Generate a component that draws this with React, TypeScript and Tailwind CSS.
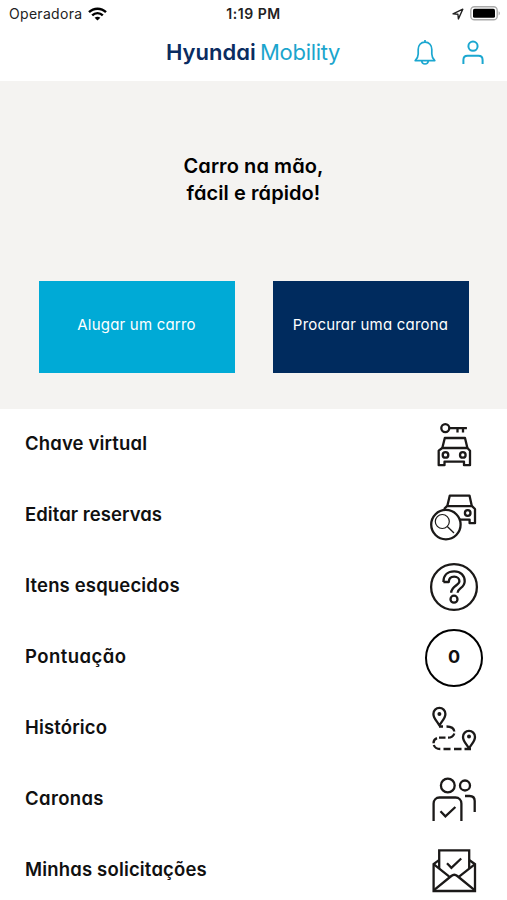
import type { ReactNode } from "react";

interface MenuItem {
  label: string;
  labelClass: string;
  icon: ReactNode;
}

function Icon({ children }: { children: ReactNode }) {
  return (
    <svg
      width="60"
      height="71"
      viewBox="0 0 60 71"
      fill="none"
      stroke="#1b1918"
      strokeWidth="2.3"
      className="shrink-0"
    >
      {children}
    </svg>
  );
}

const menu: MenuItem[] = [
  {
    label: "Chave virtual",
    labelClass: "tracking-[0.15px]",
    icon: (
      <Icon>
        <circle cx="21.3" cy="19.1" r="4" />
        <path d="M25.4 19.1H42.9M33.5 19.1V23.6M39 19.1V23.6" />
        <path d="M18.3 39L20.8 29H41L43.4 39" strokeLinejoin="round" />
        <path d="M18.3 39H43.4L46 41.7V56.2H40V52.7H20.5V56.2H14.7V41.7Z" strokeLinejoin="round" />
        <circle cx="21.5" cy="45.9" r="2.8" />
        <circle cx="38.8" cy="45.9" r="2.8" />
      </Icon>
    ),
  },
  {
    label: "Editar reservas",
    labelClass: "tracking-[0.05px]",
    icon: (
      <Icon>
        <path d="M23.3 26L25.8 15.6H45.5L47.8 26" strokeLinejoin="round" />
        <path d="M20 29L23 26.2H48L51 29V43.2H45.6V39.6H36" strokeLinejoin="round" />
        <circle cx="43.7" cy="33" r="2.8" />
        <circle cx="21.9" cy="44.6" r="14.7" fill="#fff" />
        <circle cx="18.3" cy="41.5" r="7" strokeWidth="1.2" />
        <path d="M23.3 46.5L30 53" strokeWidth="1.3" />
      </Icon>
    ),
  },
  {
    label: "Itens esquecidos",
    labelClass: "tracking-[0.15px]",
    icon: (
      <Icon>
        <circle cx="30" cy="36" r="22.9" />
        <path
          d="M19.4 31C19.4 24.2 23.8 20.4 30.2 20.4C36.6 20.4 40.7 24.6 40.7 30.2C40.7 37.2 33.6 37 33.6 41.8M19.4 31H24.8C24.8 27.6 27 25.6 30.2 25.6C33.4 25.6 35.4 27.8 35.4 30.2C35.4 34.4 27.2 35 27.2 41.8"
          strokeLinejoin="round"
        />
        <circle cx="30" cy="48.2" r="3.5" />
      </Icon>
    ),
  },
  {
    label: "Pontuação",
    labelClass: "tracking-[0.45px]",
    icon: (
      <div className="mr-px flex h-[58px] w-[58px] items-center justify-center rounded-full border-[2.3px] border-black pb-[2px] text-[18px] font-bold">
        0
      </div>
    ),
  },
  {
    label: "Histórico",
    labelClass: "tracking-[0.15px]",
    icon: (
      <Icon>
        <path d="M15.4 32.5C13 28 9.4 25.2 9.4 20.9A6 6 0 0 1 21.4 20.9C21.4 25.2 17.8 28 15.4 32.5Z" strokeLinejoin="round" />
        <circle cx="15.4" cy="21" r="2" fill="#1b1918" stroke="none" />
        <path d="M45 55.5C42.6 51 39 48.2 39 43.9A6 6 0 0 1 51 43.9C51 48.2 47.4 51 45 55.5Z" strokeLinejoin="round" />
        <circle cx="45" cy="43.6" r="2" fill="#1b1918" stroke="none" />
        <path d="M15 33.5H19M22.5 33.5C27 33.5 30 35.5 30.3 38.5M30.3 40.5C29.3 43.5 27 44.7 24 44.7M21.5 44.7H15M13 45.2C10.8 46 9.5 48 9.5 50.2M9.8 52C10.8 55 12.5 56 16.3 56M19.5 56H26.5M30 56H37.5M40.5 56H47" />
      </Icon>
    ),
  },
  {
    label: "Caronas",
    labelClass: "tracking-[0.35px]",
    icon: (
      <Icon>
        <circle cx="23.8" cy="21.5" r="6.9" />
        <circle cx="41" cy="21.5" r="5" />
        <path d="M9.6 57V39.5C9.6 36 12 33.5 15.5 33.5H31.5C35 33.5 37.4 36 37.4 39.5V57" />
        <path d="M41 32H45.5C48.8 32 50.7 34 50.7 37V48" />
        <path d="M16.5 47.2L21.4 52.3L31.4 43" />
      </Icon>
    ),
  },
  {
    label: "Minhas solicitações",
    labelClass: "tracking-[0.17px]",
    icon: (
      <Icon>
        <path d="M15.2 33.5V15.3H45.2V33.5" />
        <path d="M15 25.2L9.6 29.2V56H51V29.2L45.5 25.2" />
        <path d="M9.6 29.2L25 41.3M51 29.2L35.4 41.3M10 55.2L27.3 41C29.2 39.4 31.4 39.4 33.3 41L50.6 55.2" />
        <path d="M23 28.3L27.4 32.8L37.2 23.5" />
      </Icon>
    ),
  },
];

function StatusBar() {
  return (
    <div className="grid h-7 grid-cols-3 items-center pr-[6px] pb-px pl-[9px] text-[14px] text-[#222]">
      <div className="flex items-center gap-[6px]">
        <span className="tracking-[0.3px]">Operadora</span>
        <svg width="19" height="14" viewBox="0 0 19 14" fill="none" stroke="#000" strokeWidth="2.4">
          <path d="M1 5.2C5.8.5 13.2.5 18 5.2" />
          <path d="M4.2 8.3C7.2 5.4 11.8 5.4 14.8 8.3" />
          <path d="M9.5 13.6L6.6 10.7C8.3 9.3 10.7 9.3 12.4 10.7Z" fill="#000" stroke="none" />
        </svg>
      </div>
      <span className="pr-[3px] text-center font-semibold tracking-[0.55px]">1:19 PM</span>
      <div className="flex items-center justify-end gap-[6px]">
        <svg width="12" height="12" viewBox="0 0 12 12" fill="none" stroke="#222" strokeWidth="1.4">
          <path d="M1 5.8L10.8 1.2L6.4 10.9L5.9 6.2Z" strokeLinejoin="round" />
        </svg>
        <svg width="31" height="15" viewBox="0 0 31 15">
          <rect x=".8" y=".8" width="26.4" height="13" rx="3.6" fill="#fff" stroke="#aaa" strokeWidth="1.4" />
          <rect x="3" y="2.8" width="22" height="9" rx="1.6" fill="#000" />
          <path d="M28.6 5.2C30.3 5.8 30.3 8.8 28.6 9.4Z" fill="#aaa" />
        </svg>
      </div>
    </div>
  );
}

function Header() {
  return (
    <header className="flex h-[53px] items-center justify-end pr-[23px] pb-[5px]">
      <div className="mr-[72px] flex w-[175px] items-baseline text-[22px] leading-none whitespace-nowrap [font-feature-settings:'cv11']">
        <span className="w-[94px] font-semibold text-[#0a2c61]">Hyundai</span>
        <span className="tracking-[-0.3px] text-[#1ba5cd]">Mobility</span>
      </div>
      <div className="flex items-center gap-[25px] text-[#1ba7d0]">
        <svg width="24" height="28" viewBox="0 0 24 28" fill="none" stroke="currentColor" strokeWidth="1.7">
          <path d="M12 2V4.2M12 4.2C7.7 4.2 5.2 7.3 5.2 11.5V16C5.2 19 4.2 20.6 2.2 22.6H21.8C19.8 20.6 18.8 19 18.8 16V11.5C18.8 7.3 16.3 4.2 12 4.2Z" strokeLinejoin="round" />
          <path d="M8.8 23C9 27 15 27 15.2 23" />
        </svg>
        <svg width="22" height="25" viewBox="0 0 22 25" fill="none" stroke="currentColor" strokeWidth="2">
          <circle cx="11" cy="6.2" r="4.6" />
          <path d="M1.4 24V20C1.4 17.5 3 15.8 5.5 15.8H16.5C19 15.8 20.6 17.5 20.6 20V24" />
        </svg>
      </div>
    </header>
  );
}

export default function App() {
  return (
    <div className="h-[900px] w-[507px] overflow-hidden bg-white font-['Inter',sans-serif] text-[#101010]">
      <StatusBar />
      <Header />
      <section className="flex h-[328px] flex-col items-center bg-[#f4f3f1] pt-[72px]">
        <h1 className="text-center text-[20px] leading-[27px] font-semibold tracking-[0.08px] text-black [font-feature-settings:'cv11']">
          Carro na mão,
          <br />
          fácil e rápido!
        </h1>
        <div className="mt-[73.5px] flex gap-[38px] text-[15px] tracking-[0.2px] text-white [font-feature-settings:'cv11']">
          <button className="h-[92px] w-[196px] bg-[#00aad6] pb-[2px]">Alugar um carro</button>
          <button className="h-[92px] w-[196px] bg-[#002b5e] pb-[2px] whitespace-nowrap">Procurar uma carona</button>
        </div>
      </section>
      <ul className="[font-feature-settings:'cv11']">
        {menu.map((item) => (
          <li key={item.label} className="flex h-[71px] items-center justify-between pr-[23px] pl-[25px]">
            <span className={`pb-[2px] text-[18.5px] font-semibold ${item.labelClass}`}>{item.label}</span>
            {item.icon}
          </li>
        ))}
      </ul>
    </div>
  );
}
